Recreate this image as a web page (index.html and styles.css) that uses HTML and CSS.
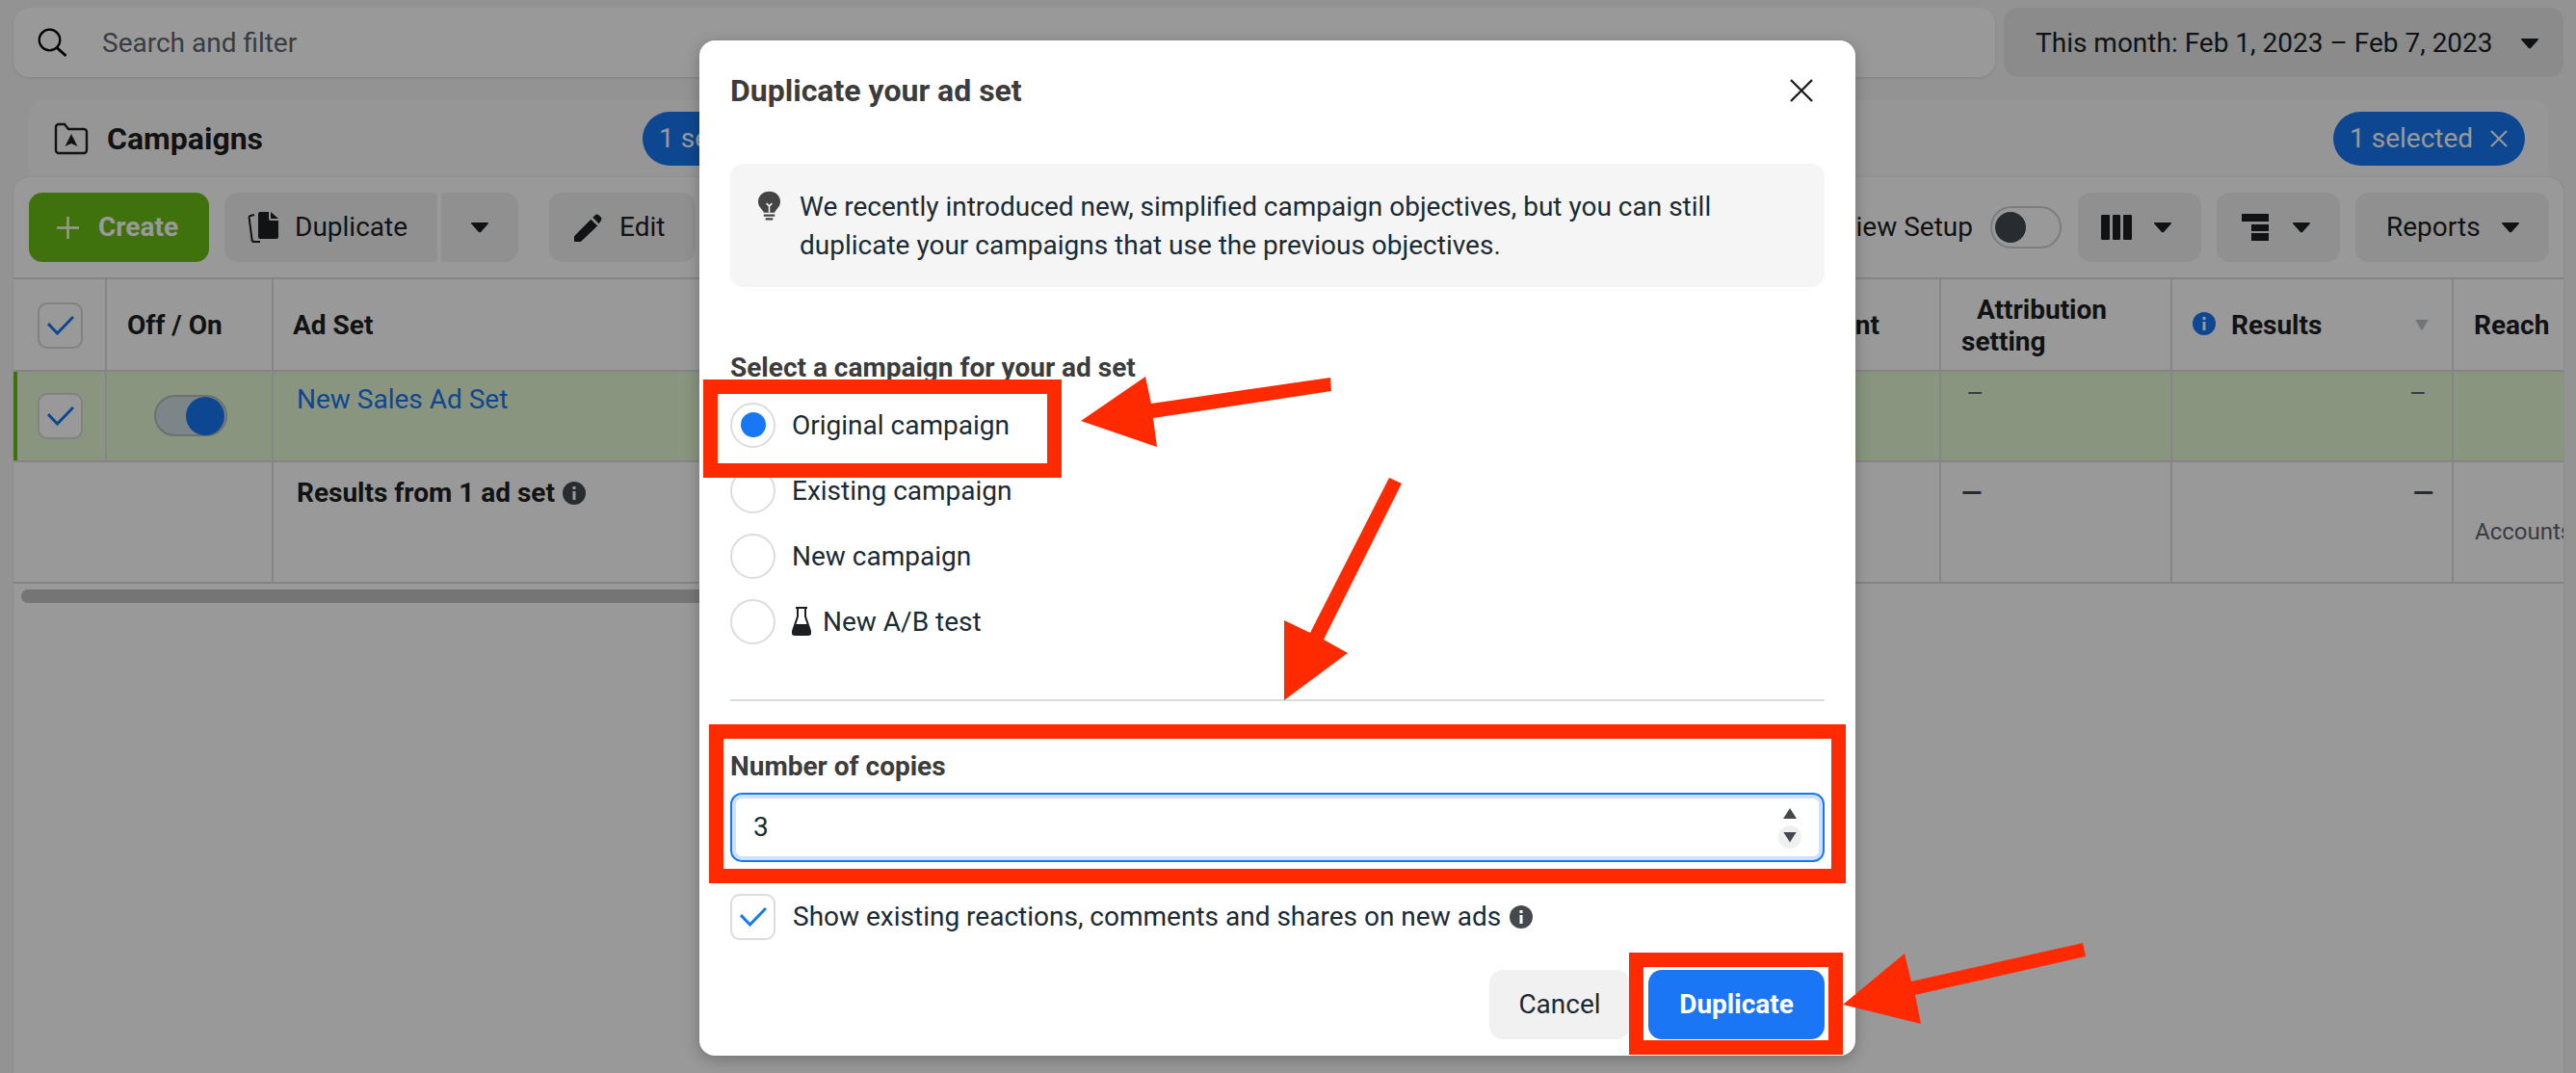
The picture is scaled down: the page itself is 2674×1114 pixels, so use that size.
FILE: index.html
```html
<!DOCTYPE html>
<html lang="en">
<head>
<meta charset="utf-8">
<title>Duplicate your ad set</title>
<link rel="stylesheet" href="styles.css">
</head>
<body>
<div class="page">
  <div class="topbar">
    <div class="search">
      <svg class="search-icon" viewBox="0 0 31 30"><circle cx="12.5" cy="12.5" r="10.8" fill="none" stroke="#000" stroke-width="2.2"/><path d="M20 20.500L29.500 29" stroke="#000" stroke-width="2.800" fill="none"/></svg>
      <span class="search-text">Search and filter</span>
    </div>
    <div class="date"><span>This month: Feb 1, 2023 – Feb 7, 2023</span><i class="caret date-caret"></i></div>
  </div>

  <div class="tabs">
    <div class="tab-main">
      <svg class="folder" viewBox="0 0 36 34"><path d="M2 5a3 3 0 0 1 3-3h6l4 5h16a3 3 0 0 1 3 3v19a3 3 0 0 1-3 3H5a3 3 0 0 1-3-3z" fill="none" stroke="#1c1e21" stroke-width="2.400"/><path d="M18 12l6.500 13-6.500-3-6.500 3z" fill="#1c1e21"/></svg>
      <span class="tab-title">Campaigns</span>
      <span class="pill pill-first">1 selected</span>
    </div>
    <span class="pill pill-last">1 selected <svg class="pill-x" viewBox="0 0 18 18"><path d="M1 1l16 16M17 1L1 17" stroke="#fff" stroke-width="2"/></svg></span>
  </div>

  <div class="card">
    <div class="toolbar">
      <div class="tool-left">
        <button class="btn btn-create"><svg class="plus" viewBox="0 0 24 24"><path d="M12 0v24M0 12h24" stroke="#fff" stroke-width="2.600"/></svg>Create</button>
        <div class="btn-group">
          <button class="btn btn-dup"><svg class="dup-icon" viewBox="0 0 32 32"><path d="M13 0h9v7a2 2 0 0 0 2 2h8v17a2 2 0 0 1-2 2H13a2 2 0 0 1-2-2V2a2 2 0 0 1 2-2z" fill="#1c1e21"/><path d="M24 0l8 7h-8z" fill="#1c1e21"/><path d="M7 3L3 4c-1 .3-1.500 1-1.400 2l3 23c.2 1.500 1 2 2.400 2h6" fill="none" stroke="#1c1e21" stroke-width="2"/></svg>Duplicate</button>
          <button class="btn btn-dup-caret"><i class="caret"></i></button>
        </div>
        <button class="btn btn-edit"><svg class="edit-icon" viewBox="0 0 30 30"><path d="M0 24L18 6l7 7L7 30H1q-1 0-1-1z" fill="#1c1e21"/><path d="M20 4l3-3q1.500-1 3 0l3 3q1 1.500 0 3l-2.500 3.500z" fill="#1c1e21"/></svg>Edit</button>
      </div>
      <div class="tool-right">
        <span class="view-text">View Setup</span>
        <span class="switch-off"><i class="switch-knob"></i></span>
        <button class="btn btn-icon btn-cols"><svg class="cols-icon" viewBox="0 0 32 26"><path d="M1 0h7a1 1 0 0 1 1 1v24a1 1 0 0 1-1 1H1a1 1 0 0 1-1-1V1a1 1 0 0 1 1-1zM13 0h6a1 1 0 0 1 1 1v24a1 1 0 0 1-1 1h-6a1 1 0 0 1-1-1V1a1 1 0 0 1 1-1zM24 0h7a1 1 0 0 1 1 1v24a1 1 0 0 1-1 1h-7a1 1 0 0 1-1-1V1a1 1 0 0 1 1-1z" fill="#1c1e21"/></svg><i class="caret"></i></button>
        <button class="btn btn-icon btn-break"><svg class="break-icon" viewBox="0 0 28 28"><path d="M0 0h28v8H0zM10 11h18v7H10zM10 20h18v8H10z" fill="#1c1e21"/></svg><i class="caret"></i></button>
        <button class="btn btn-reports">Reports<i class="caret"></i></button>
      </div>
    </div>

    <div class="table">
      <div class="cell head head-check"><span class="check"><svg class="tick" viewBox="0 0 28 20"><path d="M1 8l9.500 10L27 1" fill="none" stroke="#1877f2" stroke-width="3"/></svg></span></div>
      <div class="cell head text-cell pad-a">Off / On</div>
      <div class="cell head text-cell pad-b">Ad Set</div>
      <div class="cell head text-cell right-text">Amount</div>
      <div class="cell head attr"><span class="attr-text">Attribution setting</span></div>
      <div class="cell head results-head"><svg class="info info-blue" viewBox="0 0 24 24"><circle cx="12" cy="12" r="12" fill="#1877f2"/><path d="M10.500 10h3v9h-3zM10.500 5h3v3h-3z" fill="#fff"/></svg><span class="results-label">Results</span><i class="sort"></i></div>
      <div class="cell head text-cell pad-c last">Reach</div>

      <div class="cell row bar"><span class="check"><svg class="tick" viewBox="0 0 28 20"><path d="M1 8l9.500 10L27 1" fill="none" stroke="#1877f2" stroke-width="3"/></svg></span></div>
      <div class="cell row center"><span class="switch-on"><i class="switch-on-knob"></i></span></div>
      <div class="cell row name"><a class="link">New Sales Ad Set</a></div>
      <div class="cell row"></div>
      <div class="cell row dash-row dash-left">–</div>
      <div class="cell row dash-row dash-right">–</div>
      <div class="cell row last"></div>

      <div class="cell sum span2"></div>
      <div class="cell sum name-sum"><b>Results from 1 ad set</b><svg class="info" viewBox="0 0 24 24"><circle cx="12" cy="12" r="12" fill="#444950"/><path d="M10.500 10h3v9h-3zM10.500 5h3v3h-3z" fill="#fff"/></svg></div>
      <div class="cell sum"></div>
      <div class="cell sum dash-sum dash-sum-left">—</div>
      <div class="cell sum dash-sum dash-sum-right">—</div>
      <div class="cell sum last accounts">Accounts</div>
    </div>
    <div class="scroll"><div class="thumb"></div></div>
  </div>
</div>

<div class="overlay"></div>

<div class="modal">
  <div class="modal-head">
    <h1 class="modal-title">Duplicate your ad set</h1>
    <svg class="close" viewBox="0 0 24 24"><path d="M1 1l22 22M23 1L1 23" stroke="#1c1e21" stroke-width="2.400"/></svg>
  </div>
  <div class="notice">
    <svg class="bulb" viewBox="0 0 24 32"><path d="M12 0C5 0 0 5 0 11c0 5 3 7 5 10 1 1 1 2 1 2h12s0-1 1-2c2-3 5-5 5-10C24 5 19 0 12 0z" fill="#444"/><path d="M9 13l3 3 3-3M12 16v7" fill="none" stroke="#fff" stroke-width="1.500"/><path d="M6 26h12M8 30h8" stroke="#444" stroke-width="2.400"/></svg>
    <p class="notice-text">We recently introduced new, simplified campaign objectives, but you can still duplicate your campaigns that use the previous objectives.</p>
  </div>
  <div class="label label-select">Select a campaign for your ad set</div>
  <div class="radios">
    <div class="radio-row"><span class="radio"><i class="radio-dot"></i></span><span class="radio-text">Original campaign</span></div>
    <div class="radio-row"><span class="radio"></span><span class="radio-text">Existing campaign</span></div>
    <div class="radio-row"><span class="radio"></span><span class="radio-text">New campaign</span></div>
    <div class="radio-row"><span class="radio"></span><svg class="flask" viewBox="0 0 20 30"><path d="M4 1h12M6 1v9L1 25c-1 3 0 4 3 4h12c3 0 4-1 3-4L14 10V1" fill="none" stroke="#1c1e21" stroke-width="2"/><path d="M4 18h12l3 8c0 2-1 3-3 3H4c-2 0-3-1-3-3z" fill="#1c1e21"/></svg><span class="radio-text">New A/B test</span></div>
  </div>
  <div class="divider"></div>
  <div class="label label-copies">Number of copies</div>
  <div class="number">
    <span class="number-value">3</span>
    <span class="spin"><i class="spin-up"></i><span class="spin-down-wrap"><i class="spin-down"></i></span></span>
  </div>
  <div class="show-row">
    <span class="check-box"><svg class="tick" viewBox="0 0 28 20"><path d="M1 8l9.500 10L27 1" fill="none" stroke="#1877f2" stroke-width="3"/></svg></span>
    <span>Show existing reactions, comments and shares on new ads</span>
    <svg class="info info-modal" viewBox="0 0 24 24"><circle cx="12" cy="12" r="12" fill="#444950"/><path d="M10.500 10h3v9h-3zM10.500 5h3v3h-3z" fill="#fff"/></svg>
  </div>
  <div class="footer">
    <button class="m-btn m-cancel">Cancel</button>
    <button class="m-btn m-primary">Duplicate</button>
  </div>
</div>

<svg class="marks" viewBox="0 0 2674 1114">
  <g fill="none" stroke="#ff2a00" stroke-width="15">
    <rect x="737.500" y="401.500" width="357" height="87"/>
    <rect x="743.500" y="759.500" width="1165" height="150"/>
    <rect x="1698.500" y="996.500" width="207" height="91"/>
  </g>
  <g fill="#ff2a00">
    <path d="M1381 392L1195 419L1189 391L1122 437L1201 464L1197 434L1382 406z"/>
    <path d="M1442 496L1360 657L1333 644L1333 727L1399 678L1374 664L1455 502z"/>
    <path d="M2162 979L1984 1019L1977 990L1913 1043L1994 1063L1988 1033L2165 993z"/>
  </g>
</svg>
</body>
</html>
```
FILE: styles.css
```css
* { box-sizing: border-box; }
html, body { margin: 0; height: 100%; }
body {
  width: 2674px;
  height: 1114px;
  overflow: hidden;
  position: relative;
  background: #f5f6f7;
  font-family: Roboto, "Liberation Sans", sans-serif;
  font-size: 28px;
  line-height: 32px;
  color: #1c1e21;
}
button { font: inherit; color: inherit; border: 0; background: none; padding: 0; }

.page { padding: 8px 13px 0 14px; height: 100%; display: flex; flex-direction: column; }
.topbar { display: flex; gap: 9px; height: 72px; flex: none; }
.search {
  flex: none; width: 2057px; background: #fff; border-radius: 16px; display: flex; align-items: center;
  padding-left: 25px; box-shadow: 0 1px 3px rgba(0,0,0,.12);
}
.search-icon { width: 31px; height: 30px; }
.search-text { margin-left: 36px; color: #606770; padding-top: 2px; }
.date {
  flex: 1; background: #e8e8e8; border-radius: 14px; display: flex; align-items: center;
  padding: 2px 26px 0 33px; justify-content: space-between;
}
.caret {
  display: inline-block; width: 18px; height: 11px; background: #1c1e21; flex: none;
  clip-path: path("M1.500 0h15c1.300 0 1.900 1 1.100 1.900L10.300 10.200c-.7.800-1.900.800-2.600 0L.4 1.900C-.4 1 .2 0 1.500 0z");
}

.tabs {
  margin: 24px 15px 0 16px; height: 100px; flex: none; background: #fbfbfc; border-radius: 16px 16px 0 0;
  display: flex; justify-content: space-between; padding: 12px 25px 0 26px;
}
.tab-main { display: flex; height: 56px; flex: none; align-items: center; width: 1000px; }
.folder { width: 36px; height: 34px; flex: none; }
.tab-title { font-size: 32px; font-weight: 700; margin-left: 19px; width: 556px; flex: none; }
.pill {
  background: #1877f2; color: #fff; height: 56px; border-radius: 28px; display: inline-flex; align-items: center; flex: none;
  padding: 0 18px 0 17px; width: 199px; justify-content: space-between;
}
.pill-x { width: 18px; height: 18px; }

.card {
  flex: 1; margin-top: -20px; background: #fff; border-radius: 16px 16px 0 0; position: relative;
  box-shadow: 0 0 3px rgba(0,0,0,.12);
}
.toolbar { display: flex; justify-content: space-between; height: 104px; padding: 16px 15px 0 16px; }
.tool-left, .tool-right { display: flex; align-items: center; height: 72px; }
.btn {
  height: 72px; border-radius: 14px; background: #f0f1f2; display: inline-flex; align-items: center;
}
.btn-create { width: 187px; background: #69bc16; color: #fff; font-weight: 700; padding-left: 29px; }
.plus { width: 23px; height: 23px; margin-right: 20px; }
.btn-group { display: flex; gap: 4px; margin-left: 16px; }
.btn-dup { width: 221px; border-radius: 14px 4px 4px 14px; padding-left: 24px; }
.dup-icon { width: 32px; height: 32px; margin-right: 17px; }
.btn-dup-caret { width: 80px; border-radius: 4px 14px 14px 4px; justify-content: center; }
.btn-edit { margin-left: 32px; width: 152px; padding-left: 26px; }
.edit-icon { width: 29px; height: 29px; margin-right: 18px; }
.view-text { margin-right: 18px; }
.switch-off {
  width: 74px; height: 44px; border-radius: 22px; border: 2px solid #d0d0d0; background: #fff;
  display: flex; align-items: center; padding-left: 3px; margin-right: 17px;
}
.switch-knob { width: 32px; height: 32px; border-radius: 50%; background: #444950; }
.btn-icon { width: 128px; margin-right: 16px; }
.btn-cols { padding-left: 24px; }
.btn-break { padding-left: 26px; }
.cols-icon { width: 32px; height: 26px; margin-right: 23px; }
.break-icon { width: 28px; height: 28px; margin-right: 25px; }
.btn-reports { width: 201px; padding: 0 31px 0 32px; justify-content: space-between; }

.table {
  display: grid;
  grid-template-columns: 97px 173px 1116px 615px 240px 292px 114px;
  grid-template-rows: 96px 94px 126px;
  border-top: 2px solid #dcdcdc;
  overflow: hidden;
}
.cell { border-right: 2px solid #e0e0e0; border-bottom: 2px solid #dcdcdc; min-width: 0; }
.cell.last { border-right: 0; white-space: nowrap; overflow: hidden; }
.head { display: flex; align-items: center; font-weight: 700; padding-top: 1px; }
.head-check { padding-left: 25px; }
.pad-a { padding-left: 21px; }
.pad-b { padding-left: 20px; }
.pad-c { padding-left: 21px; }
.right-text { justify-content: flex-end; padding-right: 62px; }
.attr { padding-left: 21px; line-height: 33px; }
.attr-text { display: block; text-indent: 16px; width: 180px; }
.results-head { padding: 1px 24px 0 21px; }
.results-label { margin-left: 16px; flex: 1; }
.sort { width: 14px; height: 12px; background: #bec3c9; clip-path: polygon(0 0, 100% 0, 50% 100%); }

.check {
  width: 47px; height: 48px; background: #fff; border: 2px solid #d8d8d8; border-radius: 10px;
  display: flex; align-items: center; justify-content: center;
}
.tick { width: 28px; height: 20px; }
.row { background: #e4f8d4; }
.bar { box-shadow: inset 4px 0 0 #69bc16; padding: 22px 0 0 25px; }
.center { display: flex; padding: 24px 0 0 49px; }
.switch-on {
  width: 76px; height: 43px; border-radius: 22px; border: 2px solid #b3bcb8; background: #cfe0e5;
  display: flex; justify-content: flex-end; align-items: center; padding-right: 1px;
}
.switch-on-knob { width: 40px; height: 40px; border-radius: 50%; background: #1877f2; }
.name { padding: 13px 0 0 24px; }
.link { color: #1877f2; }
.dash-row { padding-top: 7px; color: #606770; }
.dash-left { padding-left: 26px; }
.dash-right { text-align: right; padding-right: 26px; }
.span2 { grid-column: span 2; }
.sum { padding-top: 16px; }
.name-sum { padding-left: 24px; display: flex; align-items: flex-start; }
.info { width: 24px; height: 24px; margin-left: 8px; margin-top: 4px; flex: none; }
.info-blue { margin: 0 0 4px 0; }
.dash-sum { font-weight: 700; color: #444950; }
.dash-sum-left { padding-left: 21px; }
.dash-sum-right { text-align: right; padding-right: 19px; }
.accounts { padding: 56px 0 0 22px; font-size: 24px; color: #606770; }

.scroll { padding: 6px 0 0 8px; }
.thumb { width: 720px; height: 14px; border-radius: 7px; background: #c3c3c3; }

.overlay { position: absolute; inset: 0; background: rgba(0,0,0,.4); }

.modal {
  position: absolute; left: 726px; top: 42px; width: 1200px; height: 1054px; background: #fff;
  border-radius: 16px; padding: 0 32px; box-shadow: 0 4px 16px rgba(0,0,0,.25);
  color: #1c2b33;
}
.modal-head { height: 104px; display: flex; align-items: center; justify-content: space-between; }
.modal-title { margin: 0; font-size: 32px; font-weight: 700; color: #3c3c3c; }
.close { width: 24px; height: 24px; margin-right: 12px; }
.notice {
  margin-top: 24px; height: 128px; background: #f5f5f5; border-radius: 14px; display: flex;
  padding: 28px 60px 0 29px;
}
.bulb { width: 23px; height: 32px; flex: none; margin-right: 20px; }
.notice-text { margin: -3px 0 0; line-height: 40px; }
.label { font-weight: 700; color: #3c3c3c; }
.label-select { margin-top: 68px; }
.radios { margin-top: 9px; }
.radio-row { height: 68px; display: flex; align-items: center; }
.radio-text { padding-top: 2px; }
.radio {
  width: 47px; height: 47px; border-radius: 50%; border: 2px solid #dcdcdc; margin-right: 17px;
  display: flex; align-items: center; justify-content: center; flex: none;
}
.radio-dot { width: 26px; height: 26px; border-radius: 50%; background: #1877f2; }
.flask { width: 20px; height: 30px; margin-right: 12px; }
.divider { margin-top: 47px; height: 2px; background: #d5dde3; }
.label-copies { margin-top: 52px; }
.number {
  margin-top: 11px; height: 72px; border: 2px solid #1877f2; border-radius: 12px;
  box-shadow: inset 0 0 0 4px #d0e2fb; display: flex; align-items: center; justify-content: space-between;
  padding: 0 22px 0 22px;
}
.spin { display: flex; flex-direction: column; align-items: center; gap: 6px; padding-top: 2px; }
.spin-up { width: 14px; height: 11px; background: #444950; clip-path: polygon(50% 0, 100% 100%, 0 100%); margin-bottom: 1px; }
.spin-down-wrap { width: 24px; height: 24px; border-radius: 50%; background: #f0f0f0; display: flex; align-items: center; justify-content: center; }
.spin-down { width: 14px; height: 11px; background: #444950; clip-path: polygon(0 0, 100% 0, 50% 100%); }
.show-row { margin-top: 33px; height: 48px; display: flex; align-items: center; }
.check-box {
  width: 47px; height: 48px; border: 2px solid #dcdcdc; border-radius: 10px; margin-right: 18px;
  display: flex; align-items: center; justify-content: center; flex: none;
}
.info-modal { margin: 0 0 0 9px; }
.footer { margin-top: 31px; display: flex; justify-content: flex-end; gap: 19px; }
.m-btn { height: 72px; border-radius: 14px; }
.m-cancel { width: 146px; background: #f1f1f1; }
.m-primary { width: 183px; background: #1b76f5; color: #fff; font-weight: 700; }

.marks { position: absolute; left: 0; top: 0; width: 2674px; height: 1114px; }
```
